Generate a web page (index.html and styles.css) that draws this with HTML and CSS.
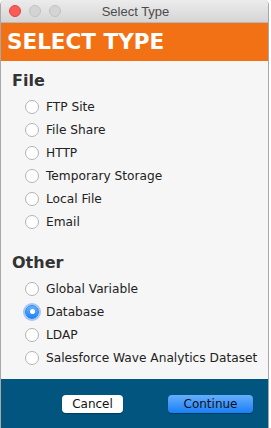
FILE: index.html
```html
<!DOCTYPE html>
<html lang="en">
<head>
    <meta charset="UTF-8">
    <title>Select Type</title>
    <link rel="stylesheet" href="styles.css">
</head>
<body>

<div class="window">
    <div class="titlebar">
        <div class="lights">
            <span class="light red"></span>
            <span class="light"></span>
            <span class="light"></span>
        </div>
        <div class="title">Select Type</div>
    </div>

    <div class="banner">SELECT TYPE</div>

    <div class="content">
        <h2>File</h2>
        <label class="option"><span class="radio"></span>FTP Site</label>
        <label class="option"><span class="radio"></span>File Share</label>
        <label class="option"><span class="radio"></span>HTTP</label>
        <label class="option"><span class="radio"></span>Temporary Storage</label>
        <label class="option"><span class="radio"></span>Local File</label>
        <label class="option"><span class="radio"></span>Email</label>

        <h2 class="other">Other</h2>
        <label class="option"><span class="radio"></span>Global Variable</label>
        <label class="option"><span class="radio checked"></span>Database</label>
        <label class="option"><span class="radio"></span>LDAP</label>
        <label class="option"><span class="radio"></span>Salesforce Wave Analytics Dataset</label>
    </div>

    <div class="footer">
        <button class="btn">Cancel</button>
        <button class="btn primary">Continue</button>
    </div>
</div>

</body>
</html>
```

FILE: styles.css
```css
/* 全局样式 */
body {
    margin: 0;
    padding: 0;
    background-color: #fff;
    font-family: "DejaVu Sans", Verdana, sans-serif;
}

/* 窗口 */
.window {
    width: 267px;
    height: 428px;
    border-left: 1px solid #a8a8a8;
    border-right: 1px solid #a8a8a8;
    border-top-right-radius: 5px;
    border-top-left-radius: 5px;
    display: flex;
    flex-direction: column;
    overflow: hidden;
}

/* 标题栏 */
.titlebar {
    height: 23px;
    flex: none;
    display: flex;
    align-items: center;
    background: linear-gradient(#ececec, #d5d5d5);
    border-bottom: 1px solid #b8b8b8;
    box-sizing: border-box;
}

.lights {
    display: flex;
    gap: 8px;
    padding-left: 8px;
}

.light {
    width: 12px;
    height: 12px;
    border-radius: 50%;
    background-color: #d4d4d4;
    border: 1px solid #c2c2c2;
    box-sizing: border-box;
}

.light.red {
    background-color: #fc5c58;
    border-color: #e0443f;
}

.title {
    flex: 1;
    text-align: center;
    font-family: "Liberation Sans", Arial, sans-serif;
    font-size: 13px;
    color: #4c4c4c;
    margin-right: 58px;
}

/* 橙色标题 */
.banner {
    height: 38px;
    flex: none;
    background-color: #f37115;
    color: #fff;
    font-weight: bold;
    font-size: 21.5px;
    line-height: 38px;
    padding-left: 6px;
}

/* 内容 */
.content {
    flex: 1;
    background-color: #f6f6f6;
    padding: 10px 0 0 11px;
}

h2 {
    margin: 0 0 4px 0;
    font-size: 16px;
    color: #333;
    line-height: 20px;
}

h2.other {
    margin-top: 20px;
}

.option {
    display: flex;
    align-items: center;
    height: 23px;
    padding-left: 13px;
    font-size: 12.2px;
    color: #222;
}

.radio {
    width: 14px;
    height: 14px;
    border-radius: 50%;
    border: 1px solid #b4b4b4;
    background: #fff;
    box-sizing: border-box;
    margin-right: 7px;
    display: flex;
    align-items: center;
    justify-content: center;
}

.radio.checked {
    border-color: #2a7fe8;
    background: linear-gradient(#6cb3fa, #1a82fb);
    box-shadow: 0 0 0 2px rgba(80, 150, 240, 0.5);
}

.radio.checked::after {
    content: "";
    width: 5px;
    height: 5px;
    border-radius: 50%;
    background-color: #fff;
}

/* 底部 */
.footer {
    height: 49px;
    flex: none;
    background-color: #02557e;
    display: flex;
    align-items: center;
    justify-content: flex-end;
    gap: 45px;
    padding-right: 15px;
}

.btn {
    height: 18px;
    padding: 0;
    width: 61px;
    border: none;
    border-radius: 4px;
    background-color: #fff;
    font-family: "DejaVu Sans", Verdana, sans-serif;
    font-size: 12px;
    color: #111;
    box-shadow: 0 1px 1px rgba(0, 0, 0, 0.3);
}

.btn.primary {
    width: 85px;
    background: linear-gradient(#66aefc, #1a7ff8);
}
```
